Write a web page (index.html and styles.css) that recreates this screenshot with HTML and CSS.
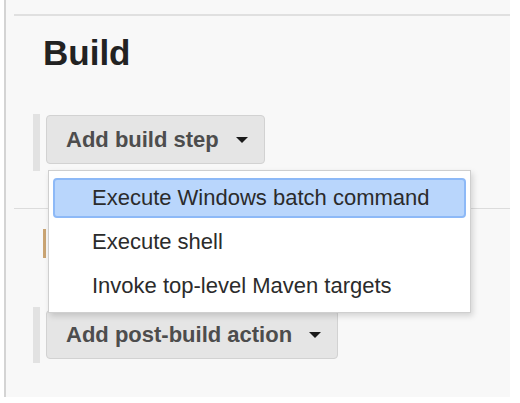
FILE: index.html
```html
<!DOCTYPE html>
<html lang="en">
<head>
    <meta charset="UTF-8">
    <title>Build</title>
    <link rel="stylesheet" href="styles.css">
</head>
<body>
    <div class="page">
        <div class="rule top-rule"></div>
        <h2>Build</h2>
        <div class="step-group">
            <div class="bar"></div>
            <button class="add-btn">Add build step <span class="caret"></span></button>
        </div>
        <div class="rule mid-rule"></div>
        <div class="mark"></div>
        <div class="step-group post">
            <div class="bar"></div>
            <button class="add-btn">Add post-build action <span class="caret"></span></button>
        </div>

        <!-- menu ouvert par "Add build step" -->
        <ul class="menu">
            <li class="active">Execute Windows batch command</li>
            <li>Execute shell</li>
            <li>Invoke top-level Maven targets</li>
        </ul>
    </div>
</body>
</html>
```

FILE: styles.css
```css
body {
    margin: 0;
    padding: 0;
    background-color: #fff;
    font-family: "Liberation Sans", Arial, sans-serif;
}
.page {
    position: relative;
    margin-left: 4px;
    width: 504px;
    height: 383px;
    padding-top: 14px;
    border-left: 2px solid #d4d4d4;
    background-color: #f8f8f8;
}
.rule {
    margin-left: 8px;
    background-color: #e0e0e0;
}
.top-rule {
    height: 2px;
}
h2 {
    margin: 17px 0 0 37px;
    font-size: 35px;
    line-height: 40px;
    color: #222;
}
.step-group {
    display: flex;
    gap: 6px;
    margin: 41px 0 0 27px;
}
.step-group .bar {
    width: 7px;
    height: 57px;
    background-color: #e2e2e2;
}
.add-btn {
    display: flex;
    align-items: center;
    height: 49px;
    margin-top: 1px;
    padding: 0 16px 0 19px;
    font-family: inherit;
    font-size: 22px;
    font-weight: bold;
    color: #4d4d4d;
    background-color: #e5e5e5;
    border: 1px solid #d2d2d2;
    border-radius: 4px;
}
.caret {
    margin-left: 17px;
    border-left: 6px solid transparent;
    border-right: 6px solid transparent;
    border-top: 6px solid #1a1a1a;
}
.mid-rule {
    height: 1px;
    margin-top: 37px;
    background-color: #dcdcdc;
}
.mark {
    width: 3px;
    height: 29px;
    margin: 20px 0 0 37px;
    background-color: #c9a473;
}
.step-group.post {
    margin-top: 49px;
}
.step-group.post .bar {
    height: 56px;
}
.step-group.post .add-btn {
    margin-top: 3px;
}
.menu {
    position: absolute;
    left: 42px;
    top: 170px;
    width: 413px;
    margin: 0;
    padding: 3px 4px 2px 4px;
    list-style: none;
    background-color: #fff;
    border: 1px solid #cfcfcf;
    box-shadow: 2px 3px 6px rgba(0, 0, 0, 0.15);
}
.menu li {
    height: 36px;
    margin: 4px 0;
    padding-left: 37px;
    line-height: 36px;
    font-size: 22px;
    color: #2b2b2b;
    border: 2px solid transparent;
    border-radius: 4px;
}
.menu li.active {
    background-color: #b9d6fc;
    border-color: #8db9f7;
}
```
